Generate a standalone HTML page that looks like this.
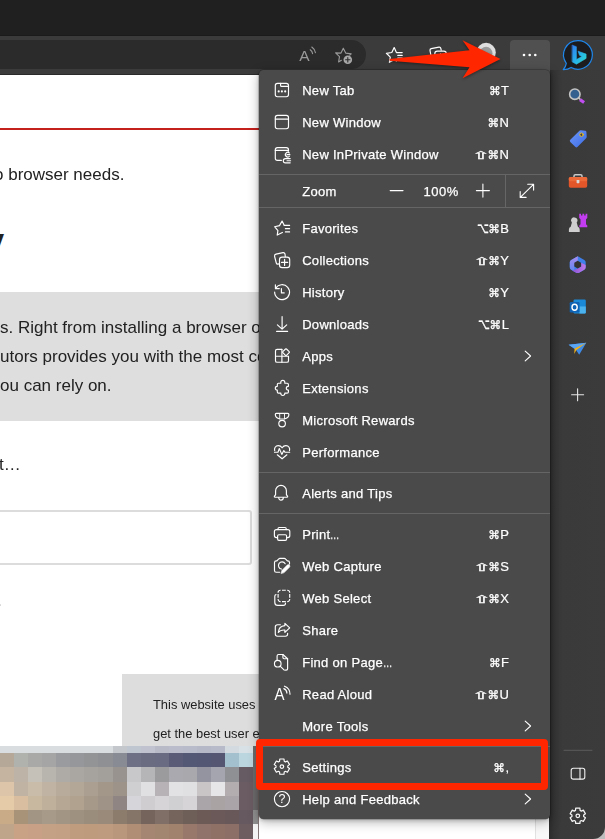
<!DOCTYPE html>
<html><head><meta charset="utf-8"><title>Edge settings menu</title>
<style>
*{box-sizing:border-box;margin:0;padding:0}
html,body{width:605px;height:839px;overflow:hidden;background:#fff}
body{position:relative;font-family:"Liberation Sans","DejaVu Sans",sans-serif}
.abs{position:absolute}
#tabbar{left:0;top:0;width:605px;height:36px;background:#202020}
#toolbar{left:0;top:35px;width:605px;height:40px;background:#3b3b3b;border-top:1px solid #1b1b1b;border-bottom:1px solid #2a2a2a}
#addr{left:-20px;top:40px;width:386.300px;height:29.400px;background:#2b2b2b;border-radius:14.5px}
#sidebar{left:549px;top:70px;width:56px;height:769px;background:linear-gradient(90deg,#2c2c2c 0,#343434 5px,#3a3a3a 12px,#3b3b3b 100%)}
#more{left:510px;top:40px;width:40px;height:34px;background:#505050;border-radius:4px 4px 0 0}
#page{left:0;top:74px;width:549px;height:765px;background:#fff;overflow:hidden}
.ptxt,.ctxt{will-change:transform}
.ptxt{position:absolute;white-space:nowrap;color:#222;font-size:17px;line-height:20px}
.ctxt{position:absolute;white-space:nowrap;color:#222;font-size:12.9px;line-height:16px}
#menu{left:259px;top:70px;width:291px;height:749px;background:#4a4a4a;border-radius:4.5px;box-shadow:0 3px 12px rgba(0,0,0,.3),0 1px 4px rgba(0,0,0,.2),0 0 0 .5px rgba(0,0,0,.35);color:#fff;font-size:13px}
.mi{position:absolute;left:0;width:291px;height:32px;line-height:32px;will-change:transform}
.mi .t{position:absolute;left:43.2px;top:1px;white-space:nowrap;letter-spacing:.29px;-webkit-text-stroke:.25px #fff}
.mi .k{position:absolute;right:41px;top:1px;white-space:nowrap;display:flex;-webkit-text-stroke:.2px #fff}
.mi svg.ic{position:absolute;left:13px;top:6px;width:20px;height:20px}
.mi svg.ch{position:absolute;left:265px;top:10px;width:8px;height:12px}
.sy{display:flex;justify-content:center;font-family:"DejaVu Sans",sans-serif}
.s2318{width:12.5px;font-size:11.8px;-webkit-text-stroke:.3px #fff}
.s21e7{width:11.7px;font-size:13px;transform:scale(1.68,.82);transform-origin:50% 62%;-webkit-text-stroke:.34px #fff}
.s2325{width:10.3px;font-size:13px;transform:translateX(-.4px) scale(.78,1.12);transform-origin:50% 60%;-webkit-text-stroke:.3px #fff}
.lt{display:inline-block}
.sep{position:absolute;left:0;width:291px;height:1px;background:#656565}
#red{left:256px;top:738.6px;width:292.4px;height:51.7px;border:7.3px solid #ff2600;border-width:7.3px 7.1px;border-radius:4px}
.el{display:inline-block;transform:scaleX(.72);transform-origin:0 50%;letter-spacing:0}
</style></head><body>
<div id="page" class="abs">
  <div class="abs" style="left:0;top:54px;width:549px;height:2px;background:#c4201c"></div>
  <div class="ptxt" style="left:-5.800px;top:90.500px">o browser needs.</div>
  <div class="abs" style="left:-17px;top:146px;font-size:38px;font-weight:bold;color:#222;line-height:44px">y</div>
  <div class="abs" style="left:0;top:218px;width:549px;height:129px;background:#dedede"></div>
  <div class="ptxt" style="left:0;top:244px">s. Right from installing a browser of</div>
  <div class="ptxt" style="left:0;top:273px">utors provides you with the most co</div>
  <div class="ptxt" style="left:0;top:302px">ou can rely on.</div>
  <div class="ptxt" style="left:-1px;top:381px">t…</div>
  <div class="abs" style="left:-10px;top:436.100px;width:261.900px;height:54.700px;border:2px solid #dcdcdc;border-radius:3px"></div>
  <div class="ptxt" style="left:-3px;top:517px">.</div>
  <div class="abs" style="left:122px;top:600px;width:430px;height:80px;background:#dddddd"></div>
  <div class="ctxt" style="left:153px;top:623px">This website uses cookies to</div>
  <div class="ctxt" style="left:153px;top:652px">get the best user experience</div>
</div>
<div id="tabbar" class="abs"></div>
<div id="toolbar" class="abs"></div>
<div id="addr" class="abs"></div>
<div class="abs" style="left:535px;top:74px;width:15px;height:765px;background:#f8f8f8;border-left:1px solid #e2e2e2"></div>
<svg class="abs" style="left:0;top:746px" width="259" height="93" viewBox="0 746 259 93" shape-rendering="crispEdges">
<rect x="-0.3" y="746.3" width="14.4" height="7.4" fill="#d9dde0"/><rect x="13.8" y="746.3" width="14.4" height="7.4" fill="#d9dde0"/><rect x="27.9" y="746.3" width="14.4" height="7.4" fill="#d9dde0"/><rect x="42.0" y="746.3" width="14.4" height="7.4" fill="#d9dde0"/><rect x="56.1" y="746.3" width="14.4" height="7.4" fill="#d9dde0"/><rect x="70.2" y="746.3" width="14.4" height="7.4" fill="#d9dde0"/><rect x="84.3" y="746.3" width="14.4" height="7.4" fill="#d9dde0"/><rect x="98.4" y="746.3" width="14.4" height="7.4" fill="#d9dde0"/><rect x="112.5" y="746.3" width="14.4" height="7.4" fill="#c4c8cc"/><rect x="126.6" y="746.3" width="14.4" height="7.4" fill="#c0c6d0"/><rect x="140.7" y="746.3" width="14.4" height="7.4" fill="#c0c3cf"/><rect x="154.8" y="746.3" width="14.4" height="7.4" fill="#b8bac8"/><rect x="168.9" y="746.3" width="14.4" height="7.4" fill="#babccb"/><rect x="183.0" y="746.3" width="14.4" height="7.4" fill="#b8bbc9"/><rect x="197.1" y="746.3" width="14.4" height="7.4" fill="#b5b9c7"/><rect x="211.2" y="746.3" width="14.4" height="7.4" fill="#b7bac8"/><rect x="225.3" y="746.3" width="14.4" height="7.4" fill="#d3dbe0"/><rect x="239.4" y="746.3" width="14.4" height="7.4" fill="#d7e1e6"/>
<rect x="-0.3" y="753.4" width="14.4" height="14.2" fill="#b5a898"/><rect x="13.8" y="753.4" width="14.4" height="14.2" fill="#b0b2ae"/><rect x="27.9" y="753.4" width="14.4" height="14.2" fill="#a9a9a8"/><rect x="42.0" y="753.4" width="14.4" height="14.2" fill="#a5a5a5"/><rect x="56.1" y="753.4" width="14.4" height="14.2" fill="#9a9b9e"/><rect x="70.2" y="753.4" width="14.4" height="14.2" fill="#95979a"/><rect x="84.3" y="753.4" width="14.4" height="14.2" fill="#939496"/><rect x="98.4" y="753.4" width="14.4" height="14.2" fill="#8e9094"/><rect x="112.5" y="753.4" width="14.4" height="14.2" fill="#888a94"/><rect x="126.6" y="753.4" width="14.4" height="14.2" fill="#6e7186"/><rect x="140.7" y="753.4" width="14.4" height="14.2" fill="#6a6c82"/><rect x="154.8" y="753.4" width="14.4" height="14.2" fill="#686b81"/><rect x="168.9" y="753.4" width="14.4" height="14.2" fill="#5a5c77"/><rect x="183.0" y="753.4" width="14.4" height="14.2" fill="#535874"/><rect x="197.1" y="753.4" width="14.4" height="14.2" fill="#535773"/><rect x="211.2" y="753.4" width="14.4" height="14.2" fill="#545672"/><rect x="225.3" y="753.4" width="14.4" height="14.2" fill="#a3c0cf"/><rect x="239.4" y="753.4" width="14.4" height="14.2" fill="#bcd6e0"/>
<rect x="-0.3" y="767.3" width="14.4" height="14.5" fill="#c5b5a0"/><rect x="13.8" y="767.3" width="14.4" height="14.5" fill="#bdb3a6"/><rect x="27.9" y="767.3" width="14.4" height="14.5" fill="#c6c1b8"/><rect x="42.0" y="767.3" width="14.4" height="14.5" fill="#b8b4ae"/><rect x="56.1" y="767.3" width="14.4" height="14.5" fill="#aeaaa6"/><rect x="70.2" y="767.3" width="14.4" height="14.5" fill="#aaa6a2"/><rect x="84.3" y="767.3" width="14.4" height="14.5" fill="#a6a29d"/><rect x="98.4" y="767.3" width="14.4" height="14.5" fill="#a39f9a"/><rect x="112.5" y="767.3" width="14.4" height="14.5" fill="#98938f"/><rect x="126.6" y="767.3" width="14.4" height="14.5" fill="#c8c8ca"/><rect x="140.7" y="767.3" width="14.4" height="14.5" fill="#b5b5b8"/><rect x="154.8" y="767.3" width="14.4" height="14.5" fill="#9b9b9e"/><rect x="168.9" y="767.3" width="14.4" height="14.5" fill="#a9a9af"/><rect x="183.0" y="767.3" width="14.4" height="14.5" fill="#a8a8ad"/><rect x="197.1" y="767.3" width="14.4" height="14.5" fill="#9494a0"/><rect x="211.2" y="767.3" width="14.4" height="14.5" fill="#a5a5af"/><rect x="225.3" y="767.3" width="14.4" height="14.5" fill="#8f9094"/><rect x="239.4" y="767.3" width="14.4" height="14.5" fill="#665b62"/>
<rect x="-0.3" y="781.5" width="14.4" height="14.5" fill="#dcc5a8"/><rect x="13.8" y="781.5" width="14.4" height="14.5" fill="#c0b3a3"/><rect x="27.9" y="781.5" width="14.4" height="14.5" fill="#c9bca9"/><rect x="42.0" y="781.5" width="14.4" height="14.5" fill="#c0b3a3"/><rect x="56.1" y="781.5" width="14.4" height="14.5" fill="#b8ab9b"/><rect x="70.2" y="781.5" width="14.4" height="14.5" fill="#b3a797"/><rect x="84.3" y="781.5" width="14.4" height="14.5" fill="#aa9f91"/><rect x="98.4" y="781.5" width="14.4" height="14.5" fill="#a3978a"/><rect x="112.5" y="781.5" width="14.4" height="14.5" fill="#9e9388"/><rect x="126.6" y="781.5" width="14.4" height="14.5" fill="#cfcfd1"/><rect x="140.7" y="781.5" width="14.4" height="14.5" fill="#e0e0e2"/><rect x="154.8" y="781.5" width="14.4" height="14.5" fill="#b6b2b5"/><rect x="168.9" y="781.5" width="14.4" height="14.5" fill="#e2e2e4"/><rect x="183.0" y="781.5" width="14.4" height="14.5" fill="#e0e0e2"/><rect x="197.1" y="781.5" width="14.4" height="14.5" fill="#c9c5c6"/><rect x="211.2" y="781.5" width="14.4" height="14.5" fill="#e6e6e8"/><rect x="225.3" y="781.5" width="14.4" height="14.5" fill="#b3adb0"/><rect x="239.4" y="781.5" width="14.4" height="14.5" fill="#6a5c62"/>
<rect x="-0.3" y="795.7" width="14.4" height="14.4" fill="#e6cba9"/><rect x="13.8" y="795.7" width="14.4" height="14.4" fill="#d9bf9f"/><rect x="27.9" y="795.7" width="14.4" height="14.4" fill="#c9b8a0"/><rect x="42.0" y="795.7" width="14.4" height="14.4" fill="#bfb09c"/><rect x="56.1" y="795.7" width="14.4" height="14.4" fill="#b6a794"/><rect x="70.2" y="795.7" width="14.4" height="14.4" fill="#b0a28f"/><rect x="84.3" y="795.7" width="14.4" height="14.4" fill="#a6998a"/><rect x="98.4" y="795.7" width="14.4" height="14.4" fill="#9f9286"/><rect x="112.5" y="795.7" width="14.4" height="14.4" fill="#8f8582"/><rect x="126.6" y="795.7" width="14.4" height="14.4" fill="#d6d6da"/><rect x="140.7" y="795.7" width="14.4" height="14.4" fill="#cfcdd0"/><rect x="154.8" y="795.7" width="14.4" height="14.4" fill="#d6d4d7"/><rect x="168.9" y="795.7" width="14.4" height="14.4" fill="#d0cfd1"/><rect x="183.0" y="795.7" width="14.4" height="14.4" fill="#d6d4d7"/><rect x="197.1" y="795.7" width="14.4" height="14.4" fill="#aaa5a8"/><rect x="211.2" y="795.7" width="14.4" height="14.4" fill="#aaa3a4"/><rect x="225.3" y="795.7" width="14.4" height="14.4" fill="#aaa4a8"/><rect x="239.4" y="795.7" width="14.4" height="14.4" fill="#6a5c62"/>
<rect x="-0.3" y="809.8" width="14.4" height="14.4" fill="#c9ab88"/><rect x="13.8" y="809.8" width="14.4" height="14.4" fill="#a89379"/><rect x="27.9" y="809.8" width="14.4" height="14.4" fill="#a39583"/><rect x="42.0" y="809.8" width="14.4" height="14.4" fill="#a89a88"/><rect x="56.1" y="809.8" width="14.4" height="14.4" fill="#a39583"/><rect x="70.2" y="809.8" width="14.4" height="14.4" fill="#9f917f"/><rect x="84.3" y="809.8" width="14.4" height="14.4" fill="#9b8d7c"/><rect x="98.4" y="809.8" width="14.4" height="14.4" fill="#9a8a79"/><rect x="112.5" y="809.8" width="14.4" height="14.4" fill="#8c7c6c"/><rect x="126.6" y="809.8" width="14.4" height="14.4" fill="#857568"/><rect x="140.7" y="809.8" width="14.4" height="14.4" fill="#75645c"/><rect x="154.8" y="809.8" width="14.4" height="14.4" fill="#7f6f66"/><rect x="168.9" y="809.8" width="14.4" height="14.4" fill="#75645c"/><rect x="183.0" y="809.8" width="14.4" height="14.4" fill="#6e5f59"/><rect x="197.1" y="809.8" width="14.4" height="14.4" fill="#6c5a57"/><rect x="211.2" y="809.8" width="14.4" height="14.4" fill="#6a5958"/><rect x="225.3" y="809.8" width="14.4" height="14.4" fill="#69585a"/><rect x="239.4" y="809.8" width="14.4" height="14.4" fill="#675960"/>
<rect x="-0.3" y="823.9" width="14.4" height="15.9" fill="#bfa58a"/><rect x="13.8" y="823.9" width="14.4" height="15.9" fill="#c9a185"/><rect x="27.9" y="823.9" width="14.4" height="15.9" fill="#c7a085"/><rect x="42.0" y="823.9" width="14.4" height="15.9" fill="#c4a184"/><rect x="56.1" y="823.9" width="14.4" height="15.9" fill="#c3a083"/><rect x="70.2" y="823.9" width="14.4" height="15.9" fill="#c09c7f"/><rect x="84.3" y="823.9" width="14.4" height="15.9" fill="#bf9b7e"/><rect x="98.4" y="823.9" width="14.4" height="15.9" fill="#be9a7e"/><rect x="112.5" y="823.9" width="14.4" height="15.9" fill="#b9977d"/><rect x="126.6" y="823.9" width="14.4" height="15.9" fill="#b08e76"/><rect x="140.7" y="823.9" width="14.4" height="15.9" fill="#a58672"/><rect x="154.8" y="823.9" width="14.4" height="15.9" fill="#a3866f"/><rect x="168.9" y="823.9" width="14.4" height="15.9" fill="#a0826d"/><rect x="183.0" y="823.9" width="14.4" height="15.9" fill="#97786a"/><rect x="197.1" y="823.9" width="14.4" height="15.9" fill="#90736a"/><rect x="211.2" y="823.9" width="14.4" height="15.9" fill="#8f7166"/><rect x="225.3" y="823.9" width="14.4" height="15.9" fill="#8c6f66"/><rect x="239.4" y="823.9" width="14.4" height="15.9" fill="#6d5d61"/>
<rect x="253.2" y="746.3" width="4.4" height="64" fill="#6c696b"/><rect x="253.2" y="810" width="4.400" height="14" fill="#8e8e8e"/><rect x="253.200" y="824" width="4.400" height="15" fill="#f4f4f4"/><rect x="257.600" y="746.300" width="1.200" height="93" fill="#85777a"/>
</svg>
<div id="sidebar" class="abs"></div>
<div id="more" class="abs"></div>
<svg class="abs" style="left:593px;top:827px" width="12" height="12" viewBox="0 0 12 12"><path d="M12 0V12H0A12 12 0 0 0 12 0Z" fill="#bdbdbd"/></svg>
<svg class="abs" style="left:295px;top:40px;will-change:transform" width="255" height="30" viewBox="295 40 255 30" fill="none" stroke-linecap="round" stroke-linejoin="round">
<g stroke="#9a9a9a" stroke-width="1.1">
<text x="299.300" y="61" font-family="Liberation Sans, sans-serif" font-size="15.500" fill="#9a9a9a" stroke="none">A</text>
<path d="M310.200 49.800A5.500 5.500 0 0 1 312.600 53.600M311.800 47A8.500 8.500 0 0 1 315.400 52.600"/>
<path d="M343.300 48.300L345.700 53.100 351.200 53.900 349.800 55.200M341.400 60.300L338.600 61.900 339.500 56.700 335.600 52.900 341 53.100 343.300 48.300"/>
</g>
<circle cx="347.800" cy="59.700" r="4.300" fill="#a8a8a8"/>
<path d="M345.600 59.700H350M347.800 57.500V61.900" stroke="#2b2b2b" stroke-width="1.1"/>
<g stroke="#fff" stroke-width="1.200">
<path d="M396.300 52.200L394.200 47.600 391.800 52.500 386.400 53.300 390.300 57.100 389.400 62.300 394.200 59.800 396.500 61"/>
<path d="M396.500 52.600H402.200M397.800 55.400H402.200M397.800 58.200H402.200"/>
<path d="M431.500 58.500L430 50.500Q429.800 49 431.200 48.700L439 47.200Q440.500 47 440.800 48.400L441.200 50.200"/>
<rect x="434.800" y="51.200" width="11.500" height="11.500" rx="2.500"/>
<path d="M440.500 53.800V60M437.400 56.900H443.600"/>
</g>
<circle cx="486.100" cy="52.500" r="9.700" fill="#dedede"/>
<circle cx="486.100" cy="53.200" r="6.400" fill="#9a9a9a"/>
<g fill="#fff"><circle cx="524" cy="55" r="1.300"/><circle cx="529.700" cy="55" r="1.300"/><circle cx="535.300" cy="55" r="1.300"/></g>
</svg>

<svg class="abs" style="left:550px;top:36px" width="55" height="803" viewBox="550 36 55 803" fill="none" stroke-linecap="round" stroke-linejoin="round">
<defs>
<linearGradient id="gb" x1="0" y1="0" x2="1" y2="1"><stop offset="0" stop-color="#2f7df0"/><stop offset=".55" stop-color="#27b5e8"/><stop offset="1" stop-color="#2fd9c7"/></linearGradient>
<linearGradient id="gm" x1="0" y1="0" x2="1" y2="1"><stop offset="0" stop-color="#4f8df5"/><stop offset=".5" stop-color="#3b5fd6"/><stop offset="1" stop-color="#b06ae6"/></linearGradient>
<linearGradient id="gt" x1="0" y1="0" x2="1" y2="1"><stop offset="0" stop-color="#6a97f7"/><stop offset="1" stop-color="#3f6ce6"/></linearGradient>
<linearGradient id="gm2" x1="0" y1="0" x2="0" y2="1"><stop offset="0" stop-color="#a98cf0"/><stop offset="1" stop-color="#5f86ee"/></linearGradient>
<linearGradient id="gm3" x1="0" y1="0" x2="1" y2="0"><stop offset="0" stop-color="#8a52d6"/><stop offset="1" stop-color="#c07ae8"/></linearGradient>
</defs>
<!-- bing -->
<path d="M578 40.600a14.300 14.300 0 1 1 -6.900 26.800q-3.400 2.300-7.900 2.200 2.600-2.800 3.100-6.300A14.300 14.300 0 0 1 578 40.600Z" fill="#1c1c1e" stroke="#1f86ea" stroke-width="1.200"/>
<path d="M572.400 45.200L576.400 46.700V59.500L582 56.600 579.500 55.300 578.100 51.200 586.100 54.100V58.400L576.400 64.200 572.400 61.900Z" fill="url(#gb)" stroke="url(#gb)" stroke-width=".6" stroke-linejoin="round"/>
<!-- search -->
<circle cx="574.850" cy="94.200" r="5.200" fill="#33608f" stroke="#c4c4c4" stroke-width="1.600"/>
<path d="M580 99.600L584.100 102.500" stroke="#c04ef0" stroke-width="3.200" stroke-linecap="butt"/><path d="M578.700 98L580.200 99.400" stroke="#c4c4c4" stroke-width="1.600" stroke-linecap="butt"/>
<!-- tag -->
<path d="M570.300 139.700L579.200 130.900Q579.900 130.200 580.900 130.300L585.200 130.800Q586.300 130.900 586.400 132L586.700 136.600Q586.800 137.600 586.100 138.300L577.600 146.800Q576.400 148 575.200 146.800L570.300 141.900Q569.200 140.800 570.300 139.700Z" fill="url(#gt)"/>
<circle cx="581.500" cy="134.700" r="1.700" fill="#3a3a50" stroke="#f5c518" stroke-width="1"/>
<!-- toolbox -->
<path d="M574 177V176Q574 174.700 575.300 174.700H580.700Q582 174.700 582 176V177" stroke="#c8c8c8" stroke-width="1.500"/>
<rect x="568.800" y="177" width="18.400" height="10.800" rx="1.800" fill="#e2562a"/>
<rect x="568.800" y="177" width="18.400" height="4.200" rx="1.500" fill="#ec6a3a"/>
<rect x="576.600" y="180" width="2.800" height="3.200" rx=".6" fill="#d8d8d8"/>
<!-- chess -->
<path d="M574.500 217.400a3 3 0 0 1 2.200 5.100l1.200 4.300q1.800 .8 1.800 2.800v2.300h-10.800v-2.300q0-2 1.800-2.800l1.200-4.300a3 3 0 0 1 2.600-5.100Z" fill="#cfcfcf"/>
<path d="M579.200 213.800h1.800v1.700h1.400v-1.700h1.800v1.700h1.400v-1.700h1.700v4.300l-1.300 1.200v5l1.300 1.200v1.800h-8v-1.800l1.200-1.200v-5l-1.300-1.200Z" fill="#c23cf0"/>
<!-- m365 -->
<path d="M577.800 256.200l6.500 3.700q1.400 .8 1.400 2.400v5q0 1.600-1.400 2.400l-5.200 3q-1.400 .8-2.800 0l-5.200-3q-1.400-.8-1.400-2.400v-5q0-1.600 1.400-2.400Z" fill="#3f7fea"/>
<path d="M577.800 256.200l-6.500 3.700q-1.400 .8-1.400 2.400v5q0 1.600 1.400 2.400l3 1.700v-6.800l3.500-2Z" fill="url(#gm2)"/>
<path d="M572.500 270.700l3.700 2q1.400 .8 2.800 0l5.200-3q1.400-.8 1.400-2.400v-2.300l-4.500-2.200v3.600l-3.400 2Z" fill="url(#gm3)"/>
<path d="M577.700 260.800l3.400 2v3.600l-3.400 2-3.400-2v-3.600Z" fill="#333"/>
<!-- outlook -->
<rect x="573.500" y="299.500" width="12.300" height="14" rx="1.200" fill="#1a8ad8"/>
<path d="M579.500 306.500h6.300v6q0 1-1 1h-5.300Z" fill="#4cb2ee"/>
<rect x="569.700" y="302" width="9.800" height="10.400" rx="1.200" fill="#0f62b4"/>
<ellipse cx="574.600" cy="307.200" rx="2.600" ry="3" stroke="#fff" stroke-width="1.400"/>
<!-- plane -->
<path d="M568.600 344.800L586.300 342.700 579.200 354.800 576.200 350.200Z" fill="#3f8be8"/>
<path d="M568.600 344.800L586.300 342.700 574.600 348.600Z" fill="#5aa6f5"/>
<path d="M574.600 348.600L586.300 342.700 576.200 350.200 574.200 354Z" fill="#f2b21a"/>
<!-- plus -->
<path d="M571.600 394.800H583.600M577.600 388.800V400.800" stroke="#e6e6e6" stroke-width="1.100"/>
<!-- bottom -->
<path d="M564 750.300H592" stroke="#5c5c5c" stroke-width="1"/>
<rect x="571.200" y="768.300" width="13.600" height="10.800" rx="2.200" stroke="#f0f0f0" stroke-width="1.100"/>
<path d="M580 768.300V779.100" stroke="#f0f0f0" stroke-width="1.100"/>
<g transform="translate(567.800 806.200)" stroke="#f4f4f4" stroke-width="1.250"><path d="M12.31 4.17 L12.11 1.99 L7.89 1.99 L7.69 4.17 L6.45 4.89 L4.46 3.97 L2.35 7.62 L4.14 8.88 L4.14 10.32 L2.35 11.58 L4.46 15.23 L6.45 14.31 L7.69 15.03 L7.89 17.21 L12.11 17.21 L12.31 15.03 L13.55 14.31 L15.54 15.23 L17.65 11.58 L15.86 10.32 L15.86 8.88 L17.65 7.62 L15.54 3.97 L13.55 4.89Z"/><circle cx="10" cy="9.600" r="1.800"/></g>
</svg>

<div id="menu" class="abs">
<div class="mi" style="top:4px"><svg class="ic" viewBox="0 0 20 20" fill="none" stroke="#fff" stroke-width="1.15" stroke-linecap="round" stroke-linejoin="round" ><rect x="3.300" y="3.400" width="13.200" height="13.300" rx="2.200"/><path d="M8.600 3.400V5.400q0 1 1 1H16.500"/><g fill="#fff" stroke="none"><circle cx="6.700" cy="11.400" r="1.050"/><circle cx="9.900" cy="11.400" r="1.050"/><circle cx="13.200" cy="11.400" r="1.050"/></g></svg><span class="t">New Tab</span><span class="k"><span class="sy s2318">⌘</span><span class="lt">T</span></span></div>
<div class="mi" style="top:36px"><svg class="ic" viewBox="0 0 20 20" fill="none" stroke="#fff" stroke-width="1.15" stroke-linecap="round" stroke-linejoin="round" ><rect x="3.300" y="3.400" width="13.200" height="13.300" rx="2.200"/><path d="M3.300 7.100H16.500"/></svg><span class="t">New Window</span><span class="k"><span class="sy s2318">⌘</span><span class="lt">N</span></span></div>
<div class="mi" style="top:68px"><svg class="ic" viewBox="0 0 20 20" fill="none" stroke="#fff" stroke-width="1.15" stroke-linecap="round" stroke-linejoin="round" ><path d="M9.400 16.400H5.500q-2.200 0-2.200-2.200V5.800q0-2.200 2.200-2.200h8.800q2.200 0 2.200 2.200V7.200"/><path d="M3.300 6.400H16.500"/><path d="M17.300 9A2.300 2.300 0 1 0 17.300 12.300M15 10.650H17.900"/><path d="M18.200 14.600H13.400A2.100 2.100 0 0 0 13.400 18.800H18.200M15 16.700H18.600"/></svg><span class="t">New InPrivate Window</span><span class="k"><span class="sy s21e7">⇧</span><span class="sy s2318">⌘</span><span class="lt">N</span></span></div>
<div class="mi" style="top:142px"><svg class="ic" viewBox="0 0 20 20" fill="none" stroke="#fff" stroke-width="1.15" stroke-linecap="round" stroke-linejoin="round" ><path d="M12.300 7.400L10.100 3 7.500 7.600 2.600 8.700 5.900 12.600 5.200 17.100 10.400 14.400"/><path d="M12.300 7.400H17.600M13.400 10.650H17.600M13.400 13.900H17.600"/></svg><span class="t">Favorites</span><span class="k"><span class="sy s2325">⌥</span><span class="sy s2318">⌘</span><span class="lt">B</span></span></div>
<div class="mi" style="top:174px"><svg class="ic" viewBox="0 0 20 20" fill="none" stroke="#fff" stroke-width="1.15" stroke-linecap="round" stroke-linejoin="round" ><rect x="7.500" y="7.100" width="10.200" height="10.500" rx="2.600"/><path d="M12.600 9.300V15.500M9.500 12.400H15.700"/><path d="M7 13.900L5.900 14.100Q4.600 14.200 4.300 13L2.600 6.500Q2.200 4.600 4 4.100L11 2.600Q12.600 2.400 13 4L13.300 6.600"/></svg><span class="t">Collections</span><span class="k"><span class="sy s21e7">⇧</span><span class="sy s2318">⌘</span><span class="lt">Y</span></span></div>
<div class="mi" style="top:206px"><svg class="ic" viewBox="0 0 20 20" fill="none" stroke="#fff" stroke-width="1.15" stroke-linecap="round" stroke-linejoin="round" ><path d="M3.550 6.600A7.450 7.450 0 1 1 2.650 10.100"/><path d="M3.400 2.700V6.600H7.300"/><path d="M9.400 6.500V10.900H12.200"/></svg><span class="t">History</span><span class="k"><span class="sy s2318">⌘</span><span class="lt">Y</span></span></div>
<div class="mi" style="top:238px"><svg class="ic" viewBox="0 0 20 20" fill="none" stroke="#fff" stroke-width="1.15" stroke-linecap="round" stroke-linejoin="round" ><path d="M10.100 2.500V15M5.400 10.800L10.100 15.200 14.700 10.800M4.600 17.400H15.600"/></svg><span class="t">Downloads</span><span class="k"><span class="sy s2325">⌥</span><span class="sy s2318">⌘</span><span class="lt">L</span></span></div>
<div class="mi" style="top:270px"><svg class="ic" viewBox="0 0 20 20" fill="none" stroke="#fff" stroke-width="1.15" stroke-linecap="round" stroke-linejoin="round" ><path d="M9.9 3.4H5.1Q3.5 3.4 3.5 5V14.65Q3.5 16.25 5.1 16.25H14.9Q16.5 16.25 16.5 14.65V10.2"/><path d="M9.9 3.4V16.25M3.5 10.2H16.5"/><rect x="11.400" y="3.600" width="5.200" height="5.200" rx=".7" transform="rotate(45 14 6.200)"/></svg><span class="t">Apps</span><svg class="ch" viewBox="0 0 8 12" fill="none" stroke="#fff" stroke-width="1.1" stroke-linecap="round" stroke-linejoin="round"><path d="M1.2 1.2L6.6 6 1.2 10.800"/></svg></div>
<div class="mi" style="top:302px"><svg class="ic" viewBox="0 0 20 20" fill="none" stroke="#fff" stroke-width="1.15" stroke-linecap="round" stroke-linejoin="round" ><path d="M6.500 5.200H8.800V4.300Q8.800 2.300 10.800 2.300 12.800 2.300 12.800 4.300V5.200H15.200Q16.400 5.200 16.400 6.400V8.300Q14.300 8.300 14.300 10.200 14.300 12.100 16.400 12.100V13.900Q16.400 15.100 15.200 15.100H12.800V15.600Q12.800 17.500 10.800 17.500 8.800 17.500 8.800 15.600V15.100H6.500Q5.300 15.100 5.300 13.900V12.100Q3.300 12.100 3.300 10.200 3.300 8.300 5.300 8.300V6.400Q5.300 5.200 6.500 5.200Z"/></svg><span class="t">Extensions</span></div>
<div class="mi" style="top:334px"><svg class="ic" viewBox="0 0 20 20" fill="none" stroke="#fff" stroke-width="1.15" stroke-linecap="round" stroke-linejoin="round" ><path d="M4.3 3.4H15.9Q16.9 3.4 16.9 4.4C16.9 7 14.5 8.4 12.3 9H7.9C5.7 8.4 3.3 7 3.3 4.400Q3.300 3.400 4.300 3.400Z"/><path d="M7.7 3.4V8.8M12.500 3.400V8.800" stroke-width=".9"/><circle cx="10.100" cy="13.600" r="3.300"/></svg><span class="t">Microsoft Rewards</span></div>
<div class="mi" style="top:366px"><svg class="ic" viewBox="0 0 20 20" fill="none" stroke="#fff" stroke-width="1.15" stroke-linecap="round" stroke-linejoin="round" ><path d="M2.7 8.6C2 6.200 3.400 3.600 6.300 3.600 8 3.600 9.300 4.600 10.100 5.800 10.900 4.600 12.200 3.600 13.900 3.600 16.800 3.600 18.200 6.200 17.500 8.600"/><path d="M5.3 12.8L10.1 16.8 14.9 12.800"/><path d="M2.5 10.2H6L7.3 6.5 9.800 12.400 11.800 8.600 12.900 10.200H17.700"/></svg><span class="t">Performance</span></div>
<div class="mi" style="top:407px"><svg class="ic" viewBox="0 0 20 20" fill="none" stroke="#fff" stroke-width="1.15" stroke-linecap="round" stroke-linejoin="round" ><path d="M3.600 11.600V7.800A5.400 5.400 0 0 1 14.400 7.800V11.600L15.600 13.400Q15.900 14.200 15.100 14.200H2.900Q2.100 14.200 2.400 13.400Z"/><path d="M6.700 14.500A2.300 2.600 0 0 0 11.300 14.500"/></svg><span class="t">Alerts and Tips</span></div>
<div class="mi" style="top:448px"><svg class="ic" viewBox="0 0 20 20" fill="none" stroke="#fff" stroke-width="1.15" stroke-linecap="round" stroke-linejoin="round" ><path d="M5.600 13.600H4.400Q2.400 13.600 2.400 11.600V7.600Q2.400 5.600 4.400 5.600H15.800Q17.800 5.600 17.800 7.600V11.600Q17.800 13.600 15.800 13.600H14.600"/><path d="M6 5.600V4.700Q6 3.500 7.200 3.500H13Q14.200 3.500 14.200 4.700V5.600"/><rect x="5.600" y="10.700" width="9" height="5.700" rx="1.300"/></svg><span class="t">Print<span class=el>…</span></span><span class="k"><span class="sy s2318">⌘</span><span class="lt">P</span></span></div>
<div class="mi" style="top:480px"><svg class="ic" viewBox="0 0 20 20" fill="none" stroke="#fff" stroke-width="1.15" stroke-linecap="round" stroke-linejoin="round" ><path d="M7.700 16.250H4.300Q2.500 16.250 2.500 14.450V6.600Q2.500 4.800 4.300 4.800H4.900L6.500 3.100Q7.100 2.400 8 2.400H12.200Q13.100 2.400 13.700 3.100L15.300 4.800H15.700Q17.500 4.800 17.500 6.600V8.100"/><path d="M13.200 7.700A3.600 3.600 0 1 0 9.500 13.050"/><path d="M9.200 17.300L9.900 14.400 15.200 9.100A1.550 1.550 0 0 1 17.400 11.300L12.100 16.600Z" fill="#fff" stroke-width=".6"/></svg><span class="t">Web Capture</span><span class="k"><span class="sy s21e7">⇧</span><span class="sy s2318">⌘</span><span class="lt">S</span></span></div>
<div class="mi" style="top:512px"><svg class="ic" viewBox="0 0 20 20" fill="none" stroke="#fff" stroke-width="1.15" stroke-linecap="round" stroke-linejoin="round" ><path stroke-linecap="butt" d="M6.100 4.700V4.500A2.300 2.300 0 0 1 8.400 2.200H8.600M15.200 2.200H15.400A2.300 2.300 0 0 1 17.700 4.500V4.700M17.700 11.100V11.300A2.300 2.300 0 0 1 15.400 13.600H15.200M8.600 13.600H8.400A2.300 2.300 0 0 1 6.100 11.300V11.100M10 2.200H13.800M17.700 6.100V9.700M10 13.600H13.800M6.100 6.100V9.700"/><path d="M4 6.600Q2.800 6.800 2.800 8.200V14.400Q2.800 17.400 5.800 17.400H11.300Q13.500 17.400 13.500 15.200V15"/></svg><span class="t">Web Select</span><span class="k"><span class="sy s21e7">⇧</span><span class="sy s2318">⌘</span><span class="lt">X</span></span></div>
<div class="mi" style="top:544px"><svg class="ic" viewBox="0 0 20 20" fill="none" stroke="#fff" stroke-width="1.15" stroke-linecap="round" stroke-linejoin="round" ><path d="M8.400 4.700H5.500Q3.300 4.700 3.300 6.900V14.050Q3.300 16.250 5.500 16.250H13.400Q15.600 16.250 15.600 14.050V13.300"/><path d="M12.900 3.300L17.700 7.800 12.900 12.300V10C9.500 9.800 7.600 10.800 6.300 12.500 6.600 8.500 9 5.900 12.900 5.600Z"/></svg><span class="t">Share</span></div>
<div class="mi" style="top:576px"><svg class="ic" viewBox="0 0 20 20" fill="none" stroke="#fff" stroke-width="1.15" stroke-linecap="round" stroke-linejoin="round" ><path d="M5.100 8.100V3.900Q5.100 2.500 6.500 2.500H10.900L15.600 6.700V16.700Q15.600 18.100 14.200 18.100H13.400"/><path d="M10.900 2.500V5.500Q10.900 6.700 12.100 6.700H15.600"/><circle cx="5.750" cy="11.700" r="3.300"/><path d="M8.100 14.100L12.300 18.100"/></svg><span class="t">Find on Page<span class=el>…</span></span><span class="k"><span class="sy s2318">⌘</span><span class="lt">F</span></span></div>
<div class="mi" style="top:608px"><svg class="ic" viewBox="0 0 20 20" fill="none" stroke="#fff" stroke-width="1.15" stroke-linecap="round" stroke-linejoin="round" ><text x="0" y="0" transform="translate(2.500 16) scale(.89 1)" font-family="Liberation Sans, sans-serif" font-size="16.800" fill="#fff" stroke="none">A</text><path d="M11.800 4.600A5 5 0 0 1 14.900 9.100M12.500 2.200A8.500 8.500 0 0 1 18 10.200"/></svg><span class="t">Read Aloud</span><span class="k"><span class="sy s21e7">⇧</span><span class="sy s2318">⌘</span><span class="lt">U</span></span></div>
<div class="mi" style="top:640px"><span class="t">More Tools</span><svg class="ch" viewBox="0 0 8 12" fill="none" stroke="#fff" stroke-width="1.1" stroke-linecap="round" stroke-linejoin="round"><path d="M1.2 1.2L6.6 6 1.2 10.800"/></svg></div>
<div class="mi" style="top:681px"><svg class="ic" viewBox="0 0 20 20" fill="none" stroke="#fff" stroke-width="1.15" stroke-linecap="round" stroke-linejoin="round" ><path d="M12.21 4.17 L12.01 1.99 L7.79 1.99 L7.59 4.17 L6.35 4.89 L4.36 3.97 L2.25 7.62 L4.04 8.88 L4.04 10.32 L2.25 11.58 L4.36 15.23 L6.35 14.31 L7.59 15.03 L7.79 17.21 L12.01 17.21 L12.21 15.03 L13.45 14.31 L15.44 15.23 L17.55 11.58 L15.76 10.32 L15.76 8.88 L17.55 7.62 L15.44 3.97 L13.45 4.89Z"/><circle cx="9.900" cy="9.600" r="1.800"/></svg><span class="t">Settings</span><span class="k"><span class="sy s2318">⌘</span><span class="lt">,</span></span></div>
<div class="mi" style="top:713px"><svg class="ic" viewBox="0 0 20 20" fill="none" stroke="#fff" stroke-width="1.15" stroke-linecap="round" stroke-linejoin="round" ><circle cx="10" cy="10.100" r="7.600"/><text x="10" y="14.400" text-anchor="middle" font-family="Liberation Sans, sans-serif" font-size="12.500" fill="#fff" stroke="none">?</text></svg><span class="t">Help and Feedback</span><svg class="ch" viewBox="0 0 8 12" fill="none" stroke="#fff" stroke-width="1.1" stroke-linecap="round" stroke-linejoin="round"><path d="M1.2 1.2L6.6 6 1.2 10.800"/></svg></div>
<div class="sep" style="top:104px"></div>
<div class="sep" style="top:137px"></div>
<div class="sep" style="top:402px"></div>
<div class="sep" style="top:443px"></div>
<div class="sep" style="top:676px"></div>
<div class="mi" style="top:105px"><span class="t">Zoom</span>
<svg class="abs" style="left:129px;top:9px" width="18" height="14" viewBox="0 0 18 14" stroke="#fff" stroke-width="1.1" stroke-linecap="round"><path d="M2.200 6.600H15"/></svg>
<span class="abs" style="left:164.600px;top:1px;letter-spacing:.45px;-webkit-text-stroke:.25px #fff">100%</span>
<svg class="abs" style="left:215px;top:7px" width="18" height="18" viewBox="0 0 18 18" stroke="#fff" stroke-width="1.1" stroke-linecap="round"><path d="M2.400 8.600H15.400M8.900 2.100V15.100"/></svg>
<div class="abs" style="left:246px;top:0;width:1px;height:32px;background:#666"></div>
<svg class="abs" style="left:258px;top:6px" width="20" height="20" viewBox="0 0 20 20" fill="none" stroke="#fff" stroke-width="1.1" stroke-linecap="round" stroke-linejoin="round"><path d="M3.300 16.300L16.500 3.300M10.700 3.200H16.600V9.100M3.200 10.500V16.400H9.100"/></svg>
</div>
</div>
<div id="red" class="abs"></div>
<svg class="abs" style="left:380px;top:30px;filter:drop-shadow(0 1px 1.500px rgba(0,0,0,.45))" width="130" height="60" viewBox="380 30 130 60"><path d="M389.600 59L469.500 50.300 462.500 40.200 500.500 58.900 462.500 78.200 469.500 67.200 389.600 60.800Z" fill="#ff2600"/></svg>
</body></html>
